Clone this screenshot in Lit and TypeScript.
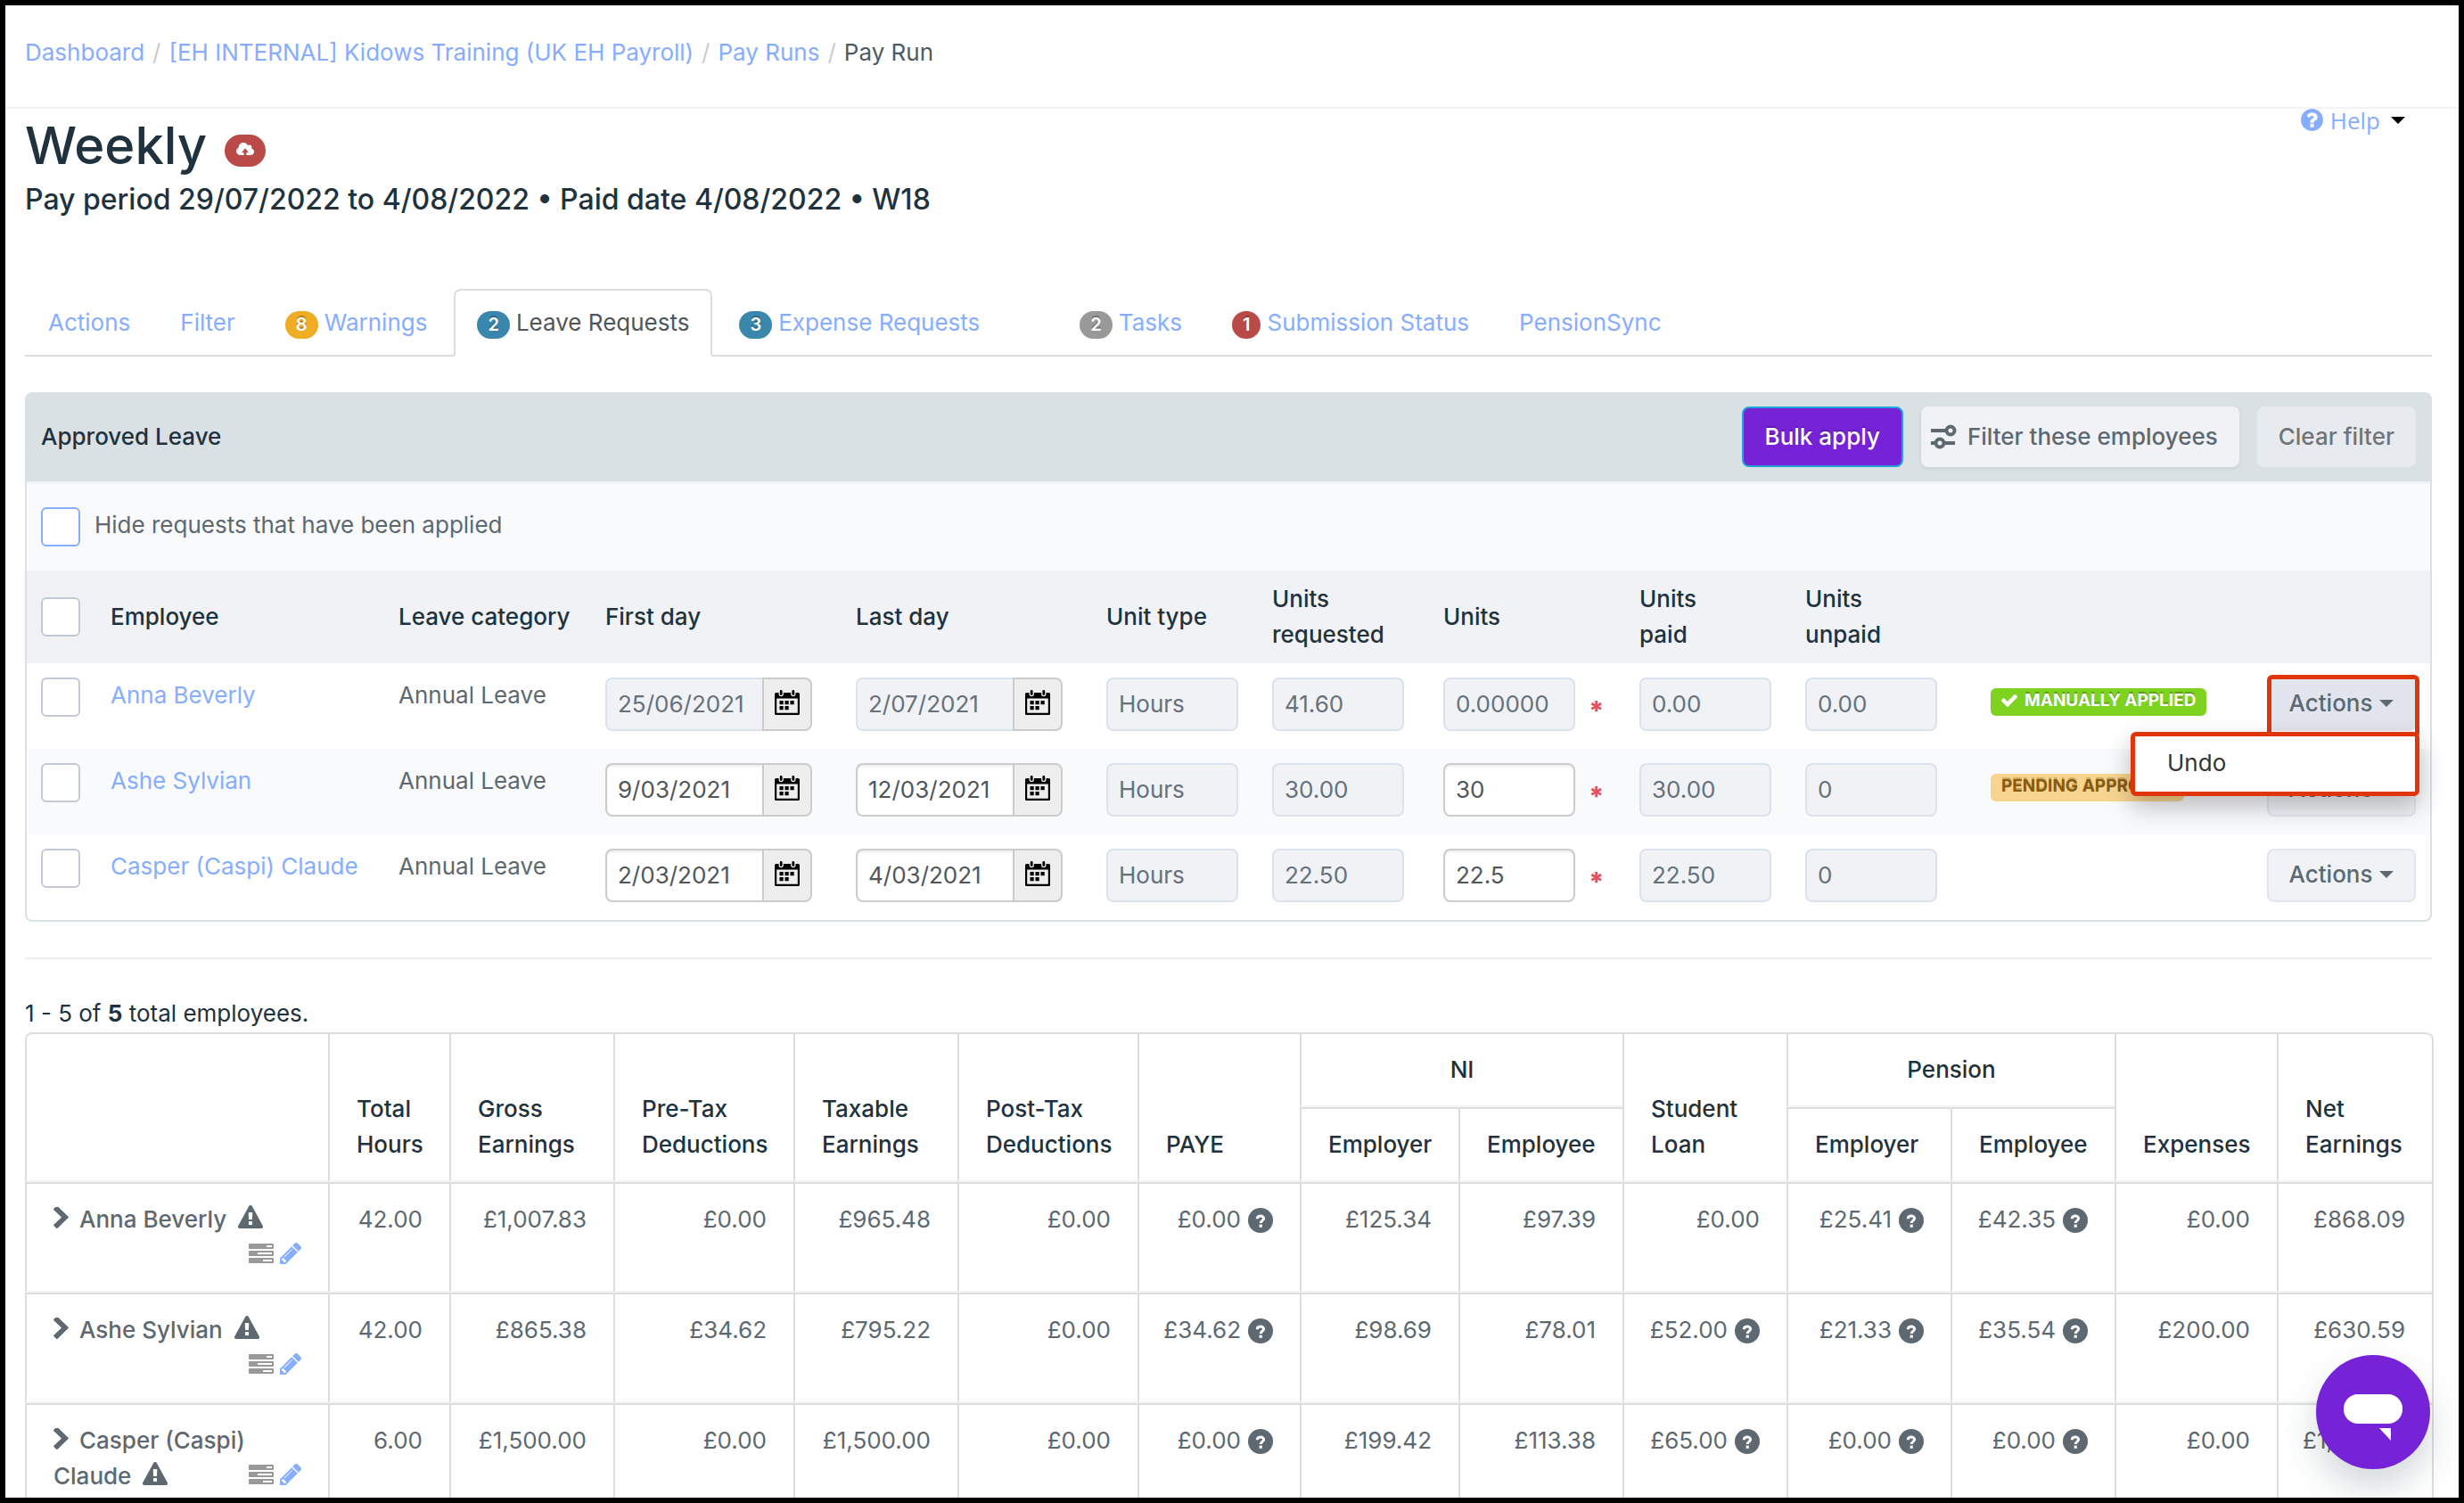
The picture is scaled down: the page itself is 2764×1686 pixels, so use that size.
import { LitElement, html, css, svg, nothing } from "lit";
import { customElement } from "lit/decorators.js";
import { classMap } from "lit/directives/class-map.js";

interface Tab {
  label: string;
  count?: number;
  tone?: string;
  active?: boolean;
  spaced?: boolean;
}

interface Leave {
  name: string;
  first: string;
  last: string;
  requested: string;
  units: string;
  paid: string;
  unpaid: string;
  locked: boolean;
  status?: "applied" | "pending";
  open?: boolean;
}

interface Money {
  value: string;
  info?: boolean;
}

interface PayRow {
  name: string;
  hours: string;
  cells: Money[];
}

const TABS: Tab[] = [
  { label: "Actions" },
  { label: "Filter" },
  { label: "Warnings", count: 8, tone: "amber" },
  { label: "Leave Requests", count: 2, tone: "blue", active: true },
  { label: "Expense Requests", count: 3, tone: "blue" },
  { label: "Tasks", count: 2, tone: "grey", spaced: true },
  { label: "Submission Status", count: 1, tone: "red" },
  { label: "PensionSync" },
];

const LEAVE: Leave[] = [
  { name: "Anna Beverly", first: "25/06/2021", last: "2/07/2021", requested: "41.60", units: "0.00000", paid: "0.00", unpaid: "0.00", locked: true, status: "applied", open: true },
  { name: "Ashe Sylvian", first: "9/03/2021", last: "12/03/2021", requested: "30.00", units: "30", paid: "30.00", unpaid: "0", locked: false, status: "pending" },
  { name: "Casper (Caspi) Claude", first: "2/03/2021", last: "4/03/2021", requested: "22.50", units: "22.5", paid: "22.50", unpaid: "0", locked: false },
];

const m = (value: string, info = false): Money => ({ value, info });

const PAY: PayRow[] = [
  {
    name: "Anna Beverly",
    hours: "42.00",
    cells: [m("£1,007.83"), m("£0.00"), m("£965.48"), m("£0.00"), m("£0.00", true), m("£125.34"), m("£97.39"), m("£0.00"), m("£25.41", true), m("£42.35", true), m("£0.00"), m("£868.09")],
  },
  {
    name: "Ashe Sylvian",
    hours: "42.00",
    cells: [m("£865.38"), m("£34.62"), m("£795.22"), m("£0.00"), m("£34.62", true), m("£98.69"), m("£78.01"), m("£52.00", true), m("£21.33", true), m("£35.54", true), m("£200.00"), m("£630.59")],
  },
  {
    name: "Casper (Caspi) Claude",
    hours: "6.00",
    cells: [m("£1,500.00"), m("£0.00"), m("£1,500.00"), m("£0.00"), m("£0.00", true), m("£199.42"), m("£113.38"), m("£65.00", true), m("£0.00", true), m("£0.00", true), m("£0.00"), m("£1,251.62")],
  },
];

const QUESTION =
  "M1024 1376v-192q0-14-9-23t-23-9h-192q-14 0-23 9t-9 23v192q0 14 9 23t23 9h192q14 0 23-9t9-23zm256-672q0-88-55.5-163t-138.5-116-170-41q-243 0-371 213-15 24 8 42l132 100q7 6 19 6 16 0 25-12 53-68 86-92 34-24 86-24 48 0 85.5 26t37.5 59q0 38-20 61t-68 45q-63 28-115.5 86.5t-52.5 125.5v36q0 14 9 23t23 9h192q14 0 23-9t9-23q0-19 21.5-49.5t54.5-49.5q32-18 49-28.5t46-35 44.5-48 28-60.5 12.5-81zm384 192q0 209-103 385.5t-279.5 279.5-385.5 103-385.5-103-279.5-279.5-103-385.5 103-385.5 279.5-279.5 385.5-103 385.5 103 279.5 279.5 103 385.5z";

const ICONS = {
  question: { box: "128 128 1536 1536", body: svg`<path d=${QUESTION} />` },
  hint: {
    box: "0 0 28 28",
    body: svg`<circle cx="14" cy="14" r="14" /><g fill="none" stroke="#fff" stroke-width="3"><path d="M10.300 12.200C10.200 8.300 17.600 8 17.600 11.700C17.600 14 14.200 14.200 14.200 17" /></g><rect x="12.600" y="18.600" width="3.200" height="3.200" fill="#fff" />`,
  },
  chevron: {
    box: "340 100 1050 1540",
    body: svg`<path d="M1363 877l-742 742q-19 19-45 19t-45-19l-166-166q-19-19-19-45t19-45l531-531-531-531q-19-19-19-45t19-45l166-166q19-19 45-19t45 19l742 742q19 19 19 45t-19 45z" />`,
  },
  warning: {
    box: "0 0 1792 1664",
    body: svg`<path d="M1024 1375v-190q0-14-9.5-23.5t-22.5-9.5h-192q-13 0-22.5 9.5t-9.5 23.5v190q0 14 9.5 23.5t22.5 9.5h192q13 0 22.5-9.5t9.5-23.5zm-2-374l18-459q0-12-10-19-13-11-24-11h-220q-11 0-24 11-10 7-10 21l17 457q0 10 10 16.5t24 6.5h185q14 0 23.5-6.5t10.5-16.5zm-14-934l768 1408q35 63-2 126-17 29-46.5 46t-63.5 17h-1536q-34 0-63.5-17t-46.5-46q-37-63-2-126l768-1408q17-31 47-49t65-18 65 18 47 49z" />`,
  },
  tasks: {
    box: "0 128 1792 1408",
    body: svg`<path d="M1024 1408h640v-128h-640v128zm-384-512h1024v-128h-1024v128zm640-512h384v-128h-384v128zm512 832v256q0 26-19 45t-45 19h-1664q-26 0-45-19t-19-45v-256q0-26 19-45t45-19h1664q26 0 45 19t19 45zm0-512v256q0 26-19 45t-45 19h-1664q-26 0-45-19t-19-45v-256q0-26 19-45t45-19h1664q26 0 45 19t19 45zm0-512v256q0 26-19 45t-45 19h-1664q-26 0-45-19t-19-45v-256q0-26 19-45t45-19h1664q26 0 45 19t19 45z" />`,
  },
  pencil: {
    box: "128 149 1515 1515",
    body: svg`<path d="M491 1536l91-91-235-235-91 91v107h128v128h107zm523-928q0-22-22-22-10 0-17 7l-542 542q-7 7-7 17 0 22 22 22 10 0 17-7l542-542q7-7 7-17zm-54-192l416 416-832 832h-416v-416zm683 96q0 53-37 90l-166 166-416-416 166-165q36-38 90-38 53 0 91 38l235 234q37 39 37 91z" />`,
  },
  check: {
    box: "121 334 1550 1188",
    body: svg`<path d="M1671 566q0 40-28 68l-724 724-136 136q-28 28-68 28t-68-28l-136-136-362-362q-28-28-28-68t28-68l136-136q28-28 68-28t68 28l294 295 656-657q28-28 68-28t68 28l136 136q28 28 28 68z" />`,
  },
  cloud: {
    box: "-64 128 1920 1408",
    body: svg`<path d="M1856 1152q0 159-112.5 271.5t-271.5 112.5h-448v-288h256l-384-480l-384 480h256v288h-384q-185 0-316.5-131.5t-131.5-316.5q0-130 70-240t188-165q-2-30-2-43 0-212 150-362t362-150q156 0 285.5 87t188.5 231q71-62 166-62 106 0 181 75t75 181q0 76-41 138 130 31 213.5 135.5t83.5 238.5z" />`,
  },
  calendar: {
    box: "0 0 28 28",
    body: svg`<path fill-rule="evenodd" d="M1.500 3H4.500V4.500a2.700 2.700 0 0 0 5.400 0V3H18.100V4.500a2.700 2.700 0 0 0 5.400 0V3H26.500A1.500 1.500 0 0 1 28 4.500V26.500A1.500 1.500 0 0 1 26.500 28H1.500A1.500 1.500 0 0 1 0 26.500V4.500A1.500 1.500 0 0 1 1.500 3ZM2.200 9.500V25.800H25.800V9.500Z" /><rect x="5.800" y="0" width="2.800" height="6" rx="1.400" /><rect x="19.400" y="0" width="2.800" height="6" rx="1.400" /><path d="M5.500 12h4.200v4.200H5.500zM11.500 12h4.200v4.200h-4.200zM17.500 12h4.200v4.200h-4.200zM5.500 18h4.200v4.200H5.500zM11.500 18h4.200v4.200h-4.200z" />`,
  },
  sliders: {
    box: "0 0 30 28",
    body: svg`<g fill="none" stroke="currentColor" stroke-width="4"><path d="M1 7H18M1 21H7M15 21H28" /><circle cx="23" cy="7" r="4.500" /><circle cx="11" cy="21" r="4.500" /></g>`,
  },
  bubble: {
    box: "0 0 66 52",
    body: svg`<rect width="66" height="33" rx="16" /><path d="M40 38H53V52Z" />`,
  },
};

const icon = (name: keyof typeof ICONS, cls: string) =>
  html`<svg class="icon ${cls}" viewBox=${ICONS[name].box} preserveAspectRatio="none" aria-hidden="true">${ICONS[name].body}</svg>`;

@customElement("app-root")
export class AppRoot extends LitElement {
  static styles = css`
    :host {
      --ink: #20323d;
      --text: #5d6870;
      --link: #86adff;
      --line: #dddddd;
      display: block;
      position: relative;
      box-sizing: border-box;
      height: 100vh;
      overflow: hidden;
      border: 6px solid #000;
      background: #fff;
      color: var(--ink);
      font: 400 26px/40px Inter, "Liberation Sans", sans-serif;
    }
    * { box-sizing: border-box; }
    a { color: var(--link); text-decoration: none; }
    button, input { font: inherit; margin: 0; }
    .icon { display: inline-block; fill: currentColor; flex: none; }

    .crumbs {
      display: flex;
      height: 116px;
      padding: 33px 22px 0;
      border-bottom: 2px solid #f3f3f3;
      color: #505a61;
    }
    .crumbs ol { display: flex; margin: 0; padding: 0; list-style: none; }
    .crumbs li + li::before { content: "/"; padding: 0 9px; color: #ccc; }

    .page { padding: 0 30px 0 22px; }
    .top { display: flex; justify-content: space-between; align-items: flex-start; }
    .heading { padding-top: 6px; }
    h1 { margin: 0; font-size: 58px; line-height: 70px; font-weight: 500; }
    .title { display: flex; align-items: center; gap: 20px; }
    .sync {
      display: grid;
      place-items: center;
      width: 46px;
      height: 36px;
      margin-top: 12px;
      border-radius: 18px;
      background: #b94a48;
      color: #fff;
    }
    .cloud { width: 20px; height: 14px; margin-bottom: 4px; }
    h2 { margin: 6px 0 0; font-size: 32px; line-height: 40px; font-weight: 500; }
    .help {
      display: flex;
      align-items: center;
      gap: 8px;
      padding: 0 30px 0 0;
      border: 0;
      background: none;
      color: var(--link);
      font: 400 26px/24px "Open Sans", sans-serif;
    }
    .help .icon { width: 25px; height: 25px; }
    .caret {
      display: inline-block;
      border: 8px solid transparent;
      border-top-color: currentColor;
      border-bottom: 0;
    }
    .help .caret { color: #000; margin-left: 4px; }

    .tabs {
      display: flex;
      gap: 4px;
      margin-top: 80px;
      border-bottom: 2px solid var(--line);
    }
    .tab {
      display: flex;
      align-items: center;
      gap: 7px;
      margin-bottom: -2px;
      padding: 16px 24px;
      border: 2px solid transparent;
      border-radius: 8px 8px 0 0;
    }
    .tab.active { border-color: var(--line) var(--line) #fff; background: #fff; color: #50565a; }
    .tab.spaced { margin-left: 56px; }
    .count {
      margin-top: 4px;
      padding: 0 12px;
      border-radius: 16px;
      color: #fff;
      font-size: 20px;
      line-height: 31px;
      font-weight: 600;
      text-shadow: 0 -2px 0 rgba(0, 0, 0, 0.25);
    }
    .amber { background: #efac25; }
    .blue { background: #3a87ad; }
    .grey { background: #999; }
    .red { background: #b94a48; }

    .panel { margin-top: 40px; border: 2px solid #dae1e4; border-radius: 8px; }
    .panel-head {
      display: flex;
      align-items: center;
      gap: 20px;
      height: 98px;
      padding: 0 16px 2px;
      background: #dae1e4;
    }
    .panel-head h3 { flex: 1; margin: 0; font-size: 26px; line-height: 40px; font-weight: 500; }
    .btn {
      display: flex;
      align-items: center;
      gap: 12px;
      height: 68px;
      padding: 0 22px;
      border: 2px solid #f0f2f6;
      border-radius: 8px;
      background: #f0f2f6;
      color: var(--text);
      font-weight: 500;
      white-space: nowrap;
    }
    .primary {
      padding: 0 24px;
      border-color: #1fa5dc;
      background: #7622d7;
      color: #fff;
      text-shadow: 0 -2px 0 rgba(0, 0, 0, 0.2);
    }
    .filter { padding-left: 8px; box-shadow: 0 2px 4px rgba(0, 0, 0, 0.08); }
    .clear { border-color: #e7ebef; background: #e7ebef; color: #6f7478; }
    .sliders { width: 30px; height: 28px; }
    .hide-row {
      display: flex;
      align-items: center;
      gap: 16px;
      height: 102px;
      padding: 0 16px;
      border: solid #f0f2f6;
      border-width: 2px 0;
      background: #f9fafc;
      color: var(--text);
    }
    .hide-row label { padding-bottom: 4px; }
    .tick {
      appearance: none;
      display: block;
      width: 44px;
      height: 44px;
      border: 2px solid #c3cad6;
      border-radius: 6px;
      background: #fff;
    }
    .hide-row .tick { border-color: var(--link); }

    table { width: 100%; table-layout: fixed; border-spacing: 0; }
    th { text-align: left; font-weight: 500; }
    .leave th { height: 102px; padding: 0 0 2px 16px; background: #f0f2f6; vertical-align: middle; }
    .leave td { height: 96px; padding: 16px 0 0 16px; color: var(--text); vertical-align: top; }
    .leave tr:nth-child(even) td { background: #f9fafc; }
    .field {
      display: block;
      width: 148px;
      height: 60px;
      padding: 0 12px 2px;
      border: 2px solid #ccc;
      border-radius: 8px;
      background: #fff;
      box-shadow: inset 0 2px 2px rgba(0, 0, 0, 0.07);
      color: #50565a;
    }
    .field:disabled { border-color: #dbe2ee; background: #f0f2f6; box-shadow: none; color: #66717a; }
    .date { display: flex; width: 232px; }
    .date .field { flex: 1; min-width: 0; border-right: 0; border-radius: 8px 0 0 8px; }
    .pick {
      display: grid;
      place-items: center;
      width: 56px;
      height: 60px;
      padding: 0;
      border: 2px solid #ccc;
      border-radius: 0 8px 8px 0;
      background: #eee;
      color: #000;
    }
    .calendar { width: 28px; height: 28px; margin-bottom: 4px; }
    .units { display: flex; align-items: center; gap: 15px; }
    .star { color: #e8505f; font-weight: 800; font-size: 30px; line-height: 20px; padding-top: 14px; }
    .status {
      display: inline-flex;
      align-items: center;
      gap: 8px;
      height: 31px;
      margin-top: 12px;
      padding: 0 12px 4px;
      border-radius: 6px;
      font-size: 19px;
      line-height: 27px;
      font-weight: 700;
      white-space: nowrap;
    }
    .applied { background: #7ed321; color: #fff; text-shadow: 0 -2px 0 rgba(0, 0, 0, 0.25); }
    .pending { background: #f8d58f; color: #875a12; text-shadow: 0 -2px 0 rgba(135, 90, 18, 0.35); }
    .check { width: 18px; height: 14px; }
    .menu-box { position: relative; width: 167px; }
    .menu-btn { width: 100%; height: 60px; justify-content: center; gap: 8px; border-color: #e2e5ee; padding: 0 0 2px; }
    .menu-btn[aria-expanded="true"] { background: #e2e5ee; }
    .open::before {
      content: "";
      position: absolute;
      z-index: 1;
      inset: -3px -4px -8px 0;
      border: 5px solid #e0340b;
      border-radius: 6px;
    }
    .menu {
      position: absolute;
      z-index: 2;
      top: 61px;
      right: -4px;
      width: 324px;
      padding: 10px 36px 12px;
      border: 5px solid #e0340b;
      border-radius: 6px;
      background: #fff;
      box-shadow: 0 12px 28px rgba(0, 0, 0, 0.25);
    }
    .menu a { display: block; color: #333; }

    .rule { height: 2px; margin: 40px 0; border: 0; background: #eee; }
    .total { margin: 0; padding: 1px 0; }
    .pay { border: solid var(--line); border-width: 0 2px 0 0; border-radius: 8px 8px 0 0; }
    .pay th, .pay td {
      padding: 20px 30px;
      border: solid var(--line);
      border-width: 2px 0 2px 2px;
      border-bottom-color: #f5f5f5;
    }
    .pay th { vertical-align: bottom; }
    .pay td { vertical-align: top; color: var(--text); text-align: right; white-space: nowrap; }
    .pay thead tr:first-child th:first-child { border-top-left-radius: 8px; }
    .pay thead tr:first-child th:last-child { border-top-right-radius: 8px; }
    .pay .group { text-align: center; }
    .pay tbody th { vertical-align: top; height: 124px; color: var(--text); }
    .money { display: flex; align-items: center; justify-content: flex-end; gap: 8px; }
    .money .icon { width: 28px; height: 28px; margin-top: 2px; }
    .chevron { width: 17px; height: 24px; margin-right: 12px; vertical-align: -1px; }
    .warning { width: 28px; height: 26px; margin-left: 6px; vertical-align: -1px; }
    .tools { float: right; display: flex; align-items: center; gap: 7px; height: 36px; color: #999; }
    .tasks { width: 28px; height: 22px; }
    .pencil { display: block; width: 24px; height: 24px; }

    .chat {
      position: absolute;
      right: 32px;
      bottom: 32px;
      display: grid;
      place-items: center;
      width: 128px;
      height: 128px;
      padding: 12px 0 0;
      border: 0;
      border-radius: 50%;
      background: #7622d7;
      box-shadow: 0 20px 40px rgba(30, 60, 70, 0.2);
      color: #fff;
    }
    .bubble { width: 66px; height: 52px; }
    .w-340 { width: 340px; } .w-136 { width: 136px; } .w-184 { width: 184px; }
    .w-202 { width: 202px; } .w-182 { width: 182px; } .w-178 { width: 178px; }
    .w-174 { width: 174px; } .w-78 { width: 78px; } .w-323 { width: 323px; }
    .w-232 { width: 232px; } .w-281 { width: 281px; } .w-186 { width: 186px; }
    .w-192 { width: 192px; } .w-220 { width: 220px; } .w-208 { width: 208px; }
    .w-310 { width: 310px; } .w-199 { width: 199px; }
  `;

  private cols(widths: number[]) {
    return html`<colgroup>${widths.map((w) => html`<col class="w-${w}" />`)}</colgroup>`;
  }

  private field(label: string, value: string, disabled = true) {
    return html`<input class="field" aria-label=${label} .value=${value} ?disabled=${disabled} />`;
  }

  private date(label: string, value: string, disabled: boolean) {
    return html`<div class="date">
      ${this.field(label, value, disabled)}
      <button class="pick" type="button" aria-label="Choose ${label}">${icon("calendar", "calendar")}</button>
    </div>`;
  }

  private status(kind?: Leave["status"]) {
    if (kind === "applied") return html`<span class="status applied">${icon("check", "check")}MANUALLY APPLIED</span>`;
    if (kind === "pending") return html`<span class="status pending">PENDING APPROVAL</span>`;
    return nothing;
  }

  private leaveRow(r: Leave) {
    return html`<tr>
      <td><input class="tick" type="checkbox" aria-label="Select ${r.name}" /></td>
      <td><a href="#employee">${r.name}</a></td>
      <td>Annual Leave</td>
      <td>${this.date("First day", r.first, r.locked)}</td>
      <td>${this.date("Last day", r.last, r.locked)}</td>
      <td>${this.field("Unit type", "Hours")}</td>
      <td>${this.field("Units requested", r.requested)}</td>
      <td><div class="units">${this.field("Units", r.units, r.locked)}<span class="star">*</span></div></td>
      <td>${this.field("Units paid", r.paid)}</td>
      <td>${this.field("Units unpaid", r.unpaid)}</td>
      <td>${this.status(r.status)}</td>
      <td>
        <div class=${classMap({ "menu-box": true, open: !!r.open })}>
          <button class="btn menu-btn" type="button" aria-expanded=${r.open ? "true" : "false"}>
            Actions<span class="caret"></span>
          </button>
          ${r.open ? html`<div class="menu"><a href="#undo">Undo</a></div>` : nothing}
        </div>
      </td>
    </tr>`;
  }

  private payRow(r: PayRow) {
    return html`<tr>
      <th scope="row">${icon("chevron", "chevron")}${r.name} ${icon("warning", "warning")}<span class="tools">${icon("tasks", "tasks")}<a href="#edit" aria-label="Edit ${r.name}">${icon("pencil", "pencil")}</a></span></th>
      <td>${r.hours}</td>
      ${r.cells.map((c) => html`<td><div class="money">${c.value}${c.info ? icon("hint", "") : nothing}</div></td>`)}
    </tr>`;
  }

  render() {
    return html`
      <nav class="crumbs" aria-label="Breadcrumb">
        <ol>
          <li><a href="#dashboard">Dashboard</a></li>
          <li><a href="#business">[EH INTERNAL] Kidows Training (UK EH Payroll)</a></li>
          <li><a href="#runs">Pay Runs</a></li>
          <li>Pay Run</li>
        </ol>
      </nav>
      <main class="page">
        <header class="top">
          <div class="heading">
            <div class="title"><h1>Weekly</h1><span class="sync">${icon("cloud", "cloud")}</span></div>
            <h2>Pay period 29/07/2022 to 4/08/2022 • Paid date 4/08/2022 • W18</h2>
          </div>
          <button class="help" type="button">${icon("question", "")}Help<span class="caret"></span></button>
        </header>
        <nav class="tabs" aria-label="Pay run sections">
          ${TABS.map(
            (t) => html`<a href="#tab" class=${classMap({ tab: true, active: !!t.active, spaced: !!t.spaced })}
              >${t.count ? html`<span class="count ${t.tone}">${t.count}</span>` : nothing}${t.label}</a>`,
          )}
        </nav>
        <section class="panel">
          <div class="panel-head">
            <h3>Approved Leave</h3>
            <button class="btn primary" type="button">Bulk apply</button>
            <button class="btn filter" type="button">${icon("sliders", "sliders")}Filter these employees</button>
            <button class="btn clear" type="button">Clear filter</button>
          </div>
          <div class="hide-row">
            <input class="tick" type="checkbox" id="hide" />
            <label for="hide">Hide requests that have been applied</label>
          </div>
          <table class="leave">
            ${this.cols([78, 323, 232, 281, 281, 186, 192, 220, 186, 208, 310, 199])}
            <thead>
              <tr>
                <th><input class="tick" type="checkbox" aria-label="Select all" /></th>
                <th>Employee</th>
                <th>Leave category</th>
                <th>First day</th>
                <th>Last day</th>
                <th>Unit type</th>
                <th>Units<br />requested</th>
                <th>Units</th>
                <th>Units<br />paid</th>
                <th>Units<br />unpaid</th>
                <th></th>
                <th></th>
              </tr>
            </thead>
            <tbody>${LEAVE.map((r) => this.leaveRow(r))}</tbody>
          </table>
        </section>
        <hr class="rule" />
        <p class="total">1 - 5 of <b>5</b> total employees.</p>
        <table class="pay">
          ${this.cols([340, 136, 184, 202, 184, 202, 182, 178, 184, 184, 184, 184, 182, 174])}
          <thead>
            <tr>
              <th rowspan="2"></th>
              <th rowspan="2">Total<br />Hours</th>
              <th rowspan="2">Gross<br />Earnings</th>
              <th rowspan="2">Pre-Tax<br />Deductions</th>
              <th rowspan="2">Taxable<br />Earnings</th>
              <th rowspan="2">Post-Tax<br />Deductions</th>
              <th rowspan="2">PAYE</th>
              <th colspan="2" class="group">NI</th>
              <th rowspan="2">Student<br />Loan</th>
              <th colspan="2" class="group">Pension</th>
              <th rowspan="2">Expenses</th>
              <th rowspan="2">Net<br />Earnings</th>
            </tr>
            <tr>
              <th>Employer</th>
              <th>Employee</th>
              <th>Employer</th>
              <th>Employee</th>
            </tr>
          </thead>
          <tbody>${PAY.map((r) => this.payRow(r))}</tbody>
        </table>
      </main>
      <button class="chat" type="button" aria-label="Open chat">${icon("bubble", "bubble")}</button>
    `;
  }
}
